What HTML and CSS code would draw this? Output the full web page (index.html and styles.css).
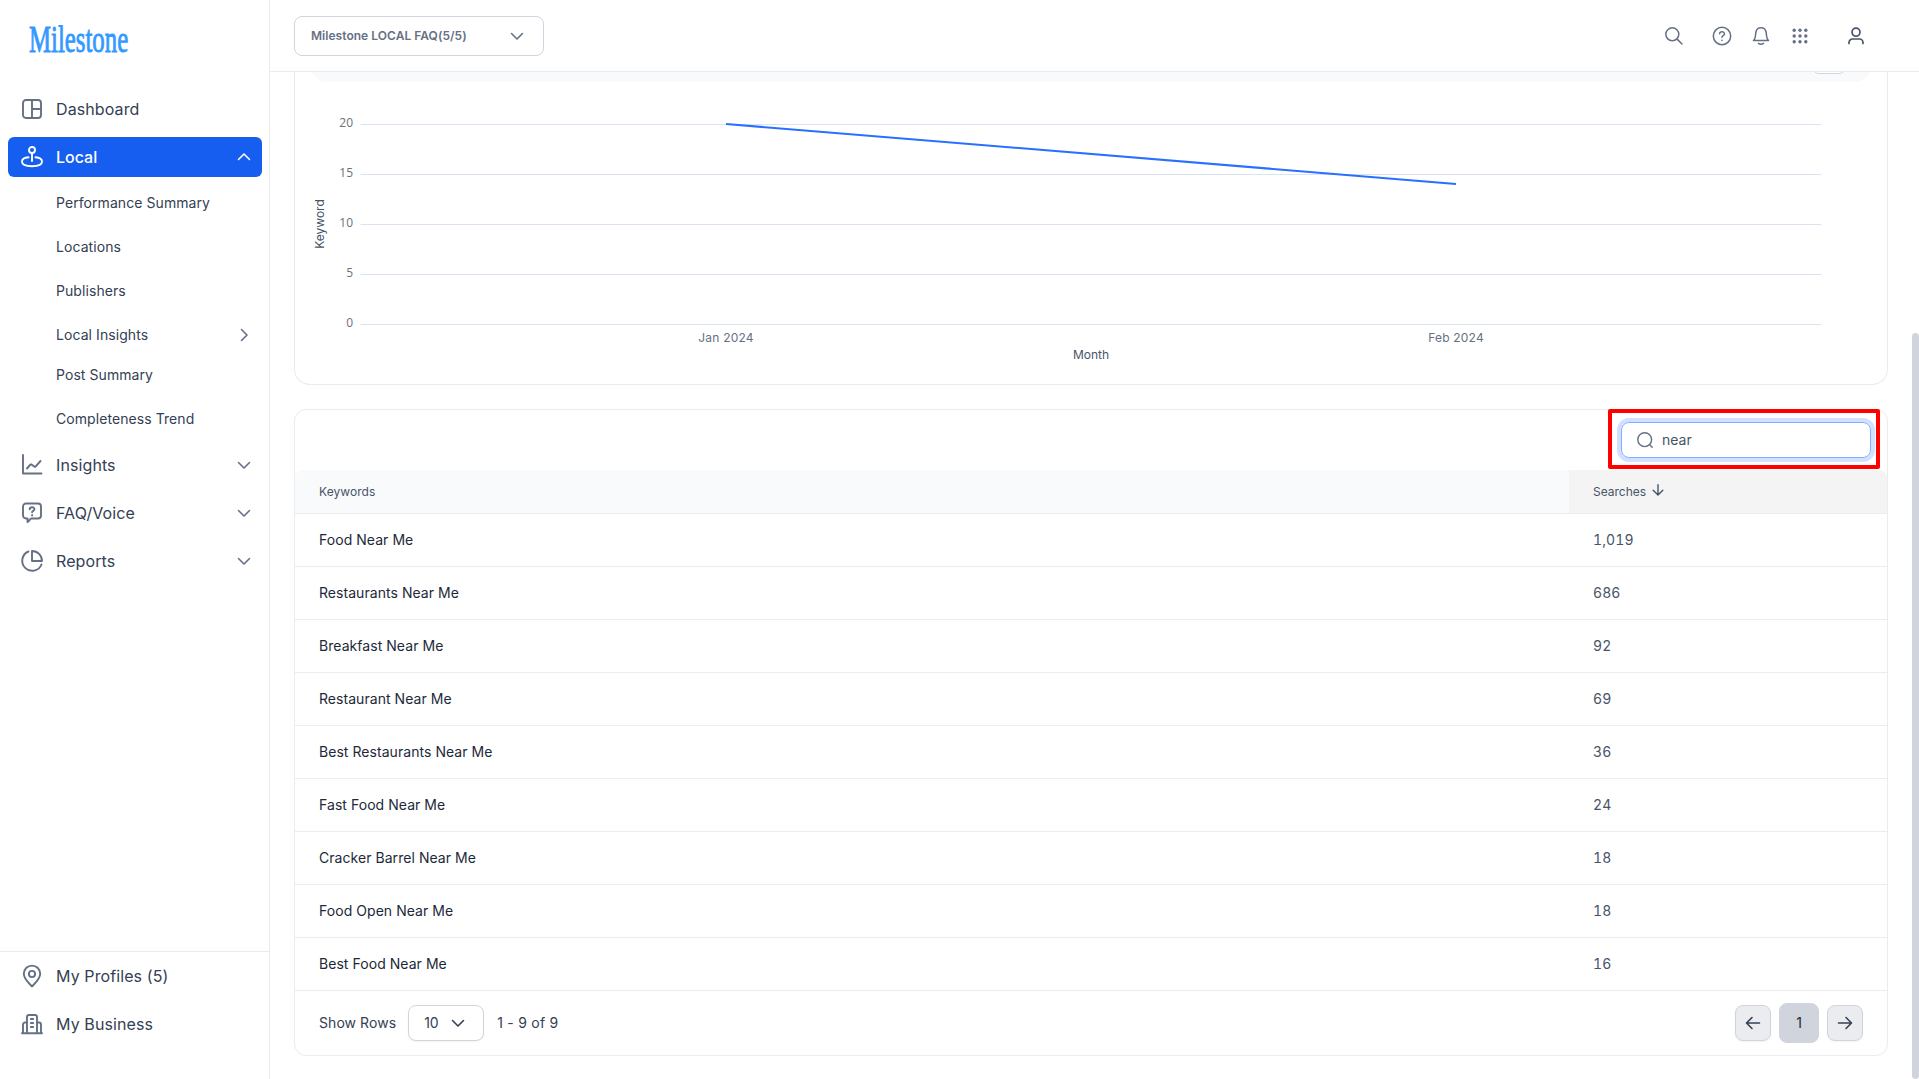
FILE: index.html
```html
<!DOCTYPE html>
<html lang="en">
<head>
  <meta charset="UTF-8">
  <meta name="viewport" content="width=device-width, initial-scale=1.0">
  <title>Milestone</title>
  <link rel="stylesheet" href="styles.css">
</head>
<body>
  <aside class="sidebar">
    <div class="logo">Milestone</div>

    <nav class="nav">
      <a class="nav-item">
        <svg class="icon" viewBox="0 0 24 24"><rect x="3" y="3" width="18" height="18" rx="3"/><path d="M12 3v18M12 12h9"/></svg>
        <span>Dashboard</span>
      </a>
      <a class="nav-item active">
        <svg class="icon" viewBox="0 0 24 24"><circle cx="12" cy="5" r="3"/><path d="M12 8v8M8.500 12.300C4.700 12.700 2 14.200 2 16.500C2 19.300 6 21.200 12 21.200S22 19.300 22 16.500C22 14.200 19.300 12.700 15.500 12.300"/></svg>
        <span>Local</span>
        <svg class="arrow" viewBox="0 0 14 14"><path d="M1.500 9.500L7 4l5.500 5.500"/></svg>
      </a>
      <div class="subnav">
        <a>Performance Summary</a>
        <a>Locations</a>
        <a>Publishers</a>
        <a class="has-children">Local Insights
          <svg class="arrow" viewBox="0 0 14 14"><path d="M4.500 1.500L10 7l-5.500 5.500"/></svg>
        </a>
        <a>Post Summary</a>
        <a>Completeness Trend</a>
      </div>
      <a class="nav-item">
        <svg class="icon" viewBox="0 0 24 24"><path d="M3 2v18.500h18.500M7 15.500l3.500-4 1 0 3 2.200 1 0L20.500 8"/></svg>
        <span>Insights</span>
        <svg class="arrow" viewBox="0 0 14 14"><path d="M1.500 4.500L7 10l5.500-5.500"/></svg>
      </a>
      <a class="nav-item">
        <svg class="icon" viewBox="0 0 24 24"><path d="M6 2.500h12a3 3 0 0 1 3 3v9a3 3 0 0 1-3 3h-6.500c-1.800 0-2.500 3.500-4 3.500v-3.500H6a3 3 0 0 1-3-3v-9a3 3 0 0 1 3-3z"/><path d="M9.700 8.200c.2-2.700 4.800-2.600 4.700.1 0 1.700-2.300 1.500-2.300 3M12.100 14v.5"/></svg>
        <span>FAQ/Voice</span>
        <svg class="arrow" viewBox="0 0 14 14"><path d="M1.500 4.500L7 10l5.500-5.500"/></svg>
      </a>
      <a class="nav-item">
        <svg class="icon" viewBox="0 0 24 24"><path d="M8.500 2.500A10 10 0 1 0 21.500 15.500"/><path d="M12 2v10h10A10 10 0 0 0 12 2z"/></svg>
        <span>Reports</span>
        <svg class="arrow" viewBox="0 0 14 14"><path d="M1.500 4.500L7 10l5.500-5.500"/></svg>
      </a>
    </nav>

    <div class="nav nav-bottom">
      <a class="nav-item">
        <svg class="icon" viewBox="0 0 24 24"><path d="M12 22.500C10 20 3.800 15.300 3.800 9.800a8.200 8.200 0 0 1 16.400 0C20.200 15.300 14 20 12 22.500z"/><circle cx="12" cy="10" r="3.100"/></svg>
        <span>My Profiles (5)</span>
      </a>
      <a class="nav-item">
        <svg class="icon" viewBox="0 0 24 24"><path d="M2 21.200h20M3 21V12.500a2 2 0 0 1 2-2h2M21 21V12.500a2 2 0 0 0-2-2h-2M7 21V5a2 2 0 0 1 2-2h6a2 2 0 0 1 2 2v16M10.800 7h2.400M10.800 11h2.400M10.800 15h2.400"/></svg>
        <span>My Business</span>
      </a>
    </div>
  </aside>

  <div class="main">
    <header class="topbar">
      <button class="account-select">
        <span>Milestone LOCAL FAQ(5/5)</span>
        <svg class="arrow" viewBox="0 0 14 14"><path d="M1.500 4.500L7 10l5.500-5.500"/></svg>
      </button>
      <div class="tools">
        <svg class="tool tool-search" viewBox="0 0 20 20"><circle cx="8.300" cy="8.300" r="6.500"/><path d="M13.100 13.100L18 18"/></svg>
        <svg class="tool" viewBox="0 0 20 20"><circle cx="10" cy="10" r="8.700"/><path d="M7.600 7.800c.2-3 4.900-2.800 4.800.1 0 1.700-2.400 1.700-2.400 3.300M10 14.200v.4"/></svg>
        <svg class="tool" viewBox="0 0 20 20"><path d="M2.500 14.500h15c-2.600-2-1.600-5-2.500-8.700a5.100 5.100 0 0 0-10 0c-.9 3.700.1 6.700-2.500 8.700zM7.500 17.400q2.500 1.800 5 0"/></svg>
        <svg class="tool dots" viewBox="0 0 20 20"><circle cx="4.200" cy="4.200" r="1.700"/><circle cx="10" cy="4.200" r="1.700"/><circle cx="15.800" cy="4.200" r="1.700"/><circle cx="4.200" cy="10" r="1.700"/><circle cx="10" cy="10" r="1.700"/><circle cx="15.800" cy="10" r="1.700"/><circle cx="4.200" cy="15.800" r="1.700"/><circle cx="10" cy="15.800" r="1.700"/><circle cx="15.800" cy="15.800" r="1.700"/></svg>
        <svg class="tool tool-user" viewBox="0 0 20 20"><circle cx="10" cy="6.200" r="4"/><path d="M3 17.500v-1a3.500 3.500 0 0 1 3.500-3.500h7a3.500 3.500 0 0 1 3.500 3.500v1"/></svg>
      </div>
    </header>

    <section class="chart-card">
      <div class="chart-head"><span class="chart-btn"></span></div>
      <svg class="chart" width="1560" height="302" viewBox="311 82 1560 302">
        <g class="grid">
          <path d="M361 124.500H1821M361 174.500H1821M361 224.500H1821M361 274.500H1821M361 324.500H1821"/>
        </g>
        <g class="ticks">
          <text x="353" y="127">20</text>
          <text x="353" y="177">15</text>
          <text x="353" y="227">10</text>
          <text x="353" y="277">5</text>
          <text x="353" y="327">0</text>
        </g>
        <g class="labels">
          <text x="726" y="342">Jan 2024</text>
          <text x="1456" y="342">Feb 2024</text>
        </g>
        <g class="axis-names">
          <text x="1091" y="359">Month</text>
          <text transform="translate(324 224) rotate(-90)">Keyword</text>
        </g>
        <path class="series" d="M726 124L1456 184"/>
      </svg>
    </section>

    <section class="table-card">
      <div class="table-tools">
        <div class="search">
          <svg class="search-icon" viewBox="0 0 16 16"><circle cx="7.700" cy="7.700" r="6.900"/><path d="M12.500 12.500l2.700 2.700"/></svg>
          <span>near</span>
        </div>
        <div class="highlight"></div>
      </div>
      <div class="row head">
        <div>Keywords</div>
        <div class="sorted">Searches
          <svg class="sort" viewBox="0 0 12 12"><path d="M6 .8v10M1.200 6.200L6 11l4.800-4.800"/></svg>
        </div>
      </div>
      <div class="row"><div>Food Near Me</div><div>1,019</div></div>
      <div class="row"><div>Restaurants Near Me</div><div>686</div></div>
      <div class="row"><div>Breakfast Near Me</div><div>92</div></div>
      <div class="row"><div>Restaurant Near Me</div><div>69</div></div>
      <div class="row"><div>Best Restaurants Near Me</div><div>36</div></div>
      <div class="row"><div>Fast Food Near Me</div><div>24</div></div>
      <div class="row"><div>Cracker Barrel Near Me</div><div>18</div></div>
      <div class="row"><div>Food Open Near Me</div><div>18</div></div>
      <div class="row"><div>Best Food Near Me</div><div>16</div></div>
      <div class="table-footer">
        <span class="footer-text">Show Rows</span>
        <button class="rows-select"><span class="footer-text">10</span>
          <svg class="arrow" viewBox="0 0 14 14"><path d="M1.500 4.500L7 10l5.500-5.500"/></svg>
        </button>
        <span class="footer-text range">1 - 9 of 9</span>
        <div class="pager">
          <button><svg viewBox="0 0 16 16"><path d="M14.500 8H1.500M7 2.500L1.500 8 7 13.500"/></svg></button>
          <button class="current">1</button>
          <button><svg viewBox="0 0 16 16"><path d="M1.500 8h13M9 2.500L14.500 8 9 13.500"/></svg></button>
        </div>
      </div>
    </section>
  </div>
  <div class="scroll-thumb"></div>
</body>
</html>
```
FILE: styles.css
```css
* {
  box-sizing: border-box;
}

body {
  margin: 0;
  display: flex;
  position: relative;
  height: 1079px;
  overflow: hidden;
  background: #fff;
  color: #344054;
  font-family: Inter, sans-serif;
  font-size: 14px;
}

button {
  font-family: inherit;
  cursor: pointer;
}

svg {
  flex-shrink: 0;
  fill: none;
  stroke: #667085;
  stroke-linecap: round;
  stroke-linejoin: round;
}

/* Sidebar */
.sidebar {
  display: flex;
  flex-direction: column;
  width: 270px;
  border-right: 1px solid #eaecec;
}

.logo {
  align-self: flex-start;
  height: 70px;
  margin: 19px 0 0 29px;
  color: #3399ff;
  font-family: "Liberation Serif", serif;
  font-size: 37px;
  line-height: 42px;
  transform: scaleX(0.67);
  transform-origin: left top;
  -webkit-text-stroke: 0.9px #3399ff;
}

.nav {
  display: flex;
  flex-direction: column;
  gap: 8px;
  padding: 0 7px 0 8px;
}

.nav-item {
  display: flex;
  align-items: center;
  height: 40px;
  padding: 0 11px 0 12px;
  border-radius: 6px;
  font-size: 16px;
  letter-spacing: 0.1px;
}

.icon {
  width: 24px;
  height: 24px;
  margin-right: 12px;
  stroke-width: 1.9;
}

.nav-item span {
  margin-right: auto;
}

.arrow {
  width: 14px;
  height: 14px;
  stroke-width: 1.6;
}

.nav-item.active {
  background: #155eef;
  color: #fff;
  font-weight: 500;
  letter-spacing: 0;
}

.active svg {
  stroke: #fff;
}

.subnav a {
  display: flex;
  align-items: center;
  justify-content: space-between;
  height: 36px;
  margin-bottom: 8px;
  padding: 0 11px 2px 48px;
  letter-spacing: 0.07px;
}

.subnav svg {
  margin-top: 2px;
}

.subnav .has-children {
  margin-bottom: 4px;
}

.subnav a:last-child {
  margin-bottom: 0;
}

.nav-bottom {
  height: 128px;
  margin-top: auto;
  padding-top: 4px;
  border-top: 1px solid #eaecec;
}

/* Top bar */
.main {
  width: 1649px;
}

.topbar {
  display: flex;
  align-items: center;
  justify-content: space-between;
  height: 72px;
  padding: 0 53px 0 24px;
  border-bottom: 1px solid #eaecec;
}

.account-select {
  display: flex;
  align-items: center;
  justify-content: space-between;
  width: 250px;
  height: 40px;
  padding: 0 19px 0 16px;
  background: #fff;
  border: 1px solid #d0d5dd;
  border-radius: 8px;
  color: #667085;
  font-size: 12px;
  font-weight: 600;
  letter-spacing: 0.04px;
}

.tools {
  display: flex;
  align-items: center;
}

.tool {
  width: 20px;
  height: 20px;
  margin-left: 19px;
  stroke-width: 1.5;
}

.tool-search {
  margin-right: 9px;
}

.tool-user {
  margin-left: 36px;
  stroke: #475467;
  stroke-width: 1.7;
}

.dots {
  fill: #667085;
  stroke: none;
}

/* Chart */
.chart-card {
  width: 1594px;
  height: 313px;
  margin: 0 0 24px 24px;
  padding: 0 16px;
  overflow: hidden;
  border: 1px solid #eaecec;
  border-top: none;
  border-radius: 0 0 16px 16px;
}

/* scrolled under the top bar, only its lower edge is visible */
.chart-head {
  display: flex;
  justify-content: flex-end;
  align-items: flex-end;
  height: 48px;
  margin-top: -38px;
  padding: 0 27px 8px 0;
  background: #f9fafb;
  border-radius: 16px;
}

.chart-btn {
  width: 30px;
  height: 30px;
  background: #fff;
  border: 1px solid #d0d5dd;
  border-radius: 4px;
}

.chart {
  display: block;
}

.grid {
  stroke: #dbe3f1;
}

.chart text {
  stroke: none;
  font-size: 12px;
  text-anchor: middle;
}

.chart .ticks text {
  fill: #6e7079;
  font-family: "Open Sans", sans-serif;
  text-anchor: end;
}

.labels {
  fill: #667085;
  letter-spacing: 0.2px;
}

.axis-names {
  fill: #475467;
}

.series {
  stroke: #2970ff;
  stroke-width: 2;
  stroke-linecap: butt;
}

/* Table */
.table-card {
  width: 1594px;
  margin-left: 24px;
  border: 1px solid #eaecf0;
  border-radius: 12px;
}

.table-tools {
  display: flex;
  justify-content: flex-end;
  position: relative;
  height: 60px;
  padding: 12px 16px 0 0;
}

.search {
  display: flex;
  align-items: center;
  gap: 9px;
  width: 250px;
  height: 36px;
  padding-left: 15px;
  border: 1px solid #84adff;
  border-radius: 8px;
  box-shadow: 0 0 0 4px #d1e0ff;
  color: #475467;
}

.search span {
  padding-bottom: 2px;
}

.search-icon {
  width: 16px;
  height: 16px;
  stroke-width: 1.4;
}

.highlight {
  position: absolute;
  top: -1px;
  right: 7px;
  width: 272px;
  height: 60px;
  border: 4px solid #f00;
  border-radius: 2px;
}

.row {
  display: grid;
  grid-template-columns: 1274px 1fr;
  height: 53px;
  border-bottom: 1px solid #eaecf0;
  color: #1d2939;
  letter-spacing: 0.05px;
}

.row div {
  display: flex;
  align-items: center;
  padding: 0 0 2px 24px;
}

.row div:last-child {
  color: #475467;
  font-variant-numeric: tabular-nums;
  letter-spacing: 0.1px;
}

.row.head {
  height: 44px;
  font-size: 12px;
}

.row.head div {
  padding-bottom: 0;
  background: #f9fafb;
  color: #475467;
  letter-spacing: 0.05px;
}

.row.head div:first-child {
  border-top-left-radius: 8px;
}

.row.head .sorted {
  gap: 6px;
  background: #f4f4f4;
  border-top-right-radius: 8px;
  letter-spacing: 0;
}

.sort {
  width: 12px;
  height: 12px;
  margin-bottom: 3px;
  stroke: #475467;
  stroke-width: 1.4;
}

.table-footer {
  display: flex;
  align-items: center;
  height: 64px;
  padding: 0 24px;
  letter-spacing: 0.06px;
}

.footer-text {
  padding-bottom: 2px;
}

.rows-select {
  display: flex;
  align-items: center;
  justify-content: space-between;
  width: 76px;
  height: 36px;
  margin: 0 13px 0 12px;
  padding: 0 18px 0 15px;
  background: #fff;
  border: 1px solid #d0d5dd;
  border-radius: 8px;
  box-shadow: 0 1px 2px rgba(16, 24, 40, 0.05);
  color: #344054;
  font-size: 14px;
}

.rows-select svg {
  stroke: #344054;
}

.range {
  letter-spacing: 0.25px;
}

.pager {
  display: flex;
  align-items: center;
  gap: 8px;
  margin-left: auto;
}

.pager button {
  display: flex;
  align-items: center;
  justify-content: center;
  width: 36px;
  height: 36px;
  padding: 0;
  background: #eaecf0;
  border: 1px solid #d0d5dd;
  border-radius: 8px;
  box-shadow: 0 1px 2px rgba(16, 24, 40, 0.05);
}

.pager svg {
  width: 16px;
  height: 16px;
  stroke: #344054;
  stroke-width: 1.6;
}

.pager .current {
  width: 40px;
  height: 40px;
  padding-bottom: 2px;
  background: #d0d5dd;
  box-shadow: none;
  color: #1d2939;
  font-size: 14px;
}

/* Page scrollbar */
.scroll-thumb {
  position: absolute;
  top: 333px;
  right: 0;
  width: 7px;
  height: 746px;
  background: #d0d5dd;
  border-radius: 4px;
}
```
